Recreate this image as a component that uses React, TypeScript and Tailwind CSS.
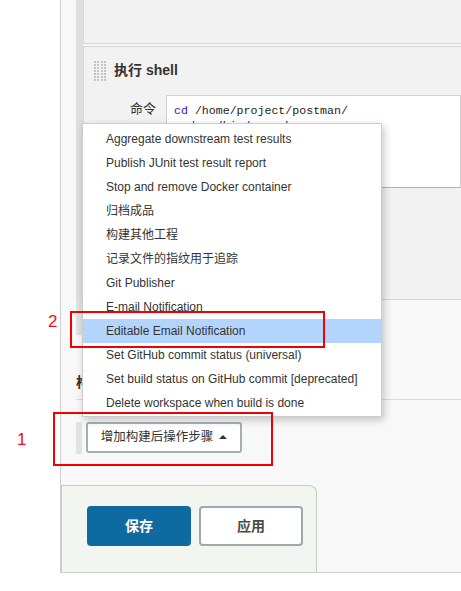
import React from "react";

const items = [
  "Aggregate downstream test results",
  "Publish JUnit test result report",
  "Stop and remove Docker container",
  "归档成品",
  "构建其他工程",
  "记录文件的指纹用于追踪",
  "Git Publisher",
  "E-mail Notification",
  "Editable Email Notification",
  "Set GitHub commit status (universal)",
  "Set build status on GitHub commit [deprecated]",
  "Delete workspace when build is done",
];

const sans = "font-['Liberation_Sans','Noto_Sans_CJK_SC',sans-serif]";

function DragHandle() {
  return (
    <div className="grid grid-cols-4 gap-[1px] w-[12px]">
      {Array.from({ length: 28 }).map((_, i) => (
        <div key={i} className="h-[2px] w-[2px] bg-[#c4c4c4]" />
      ))}
    </div>
  );
}

export default function App() {
  return (
    <div className={`relative h-[591px] w-[461px] overflow-hidden bg-white ${sans}`}>
      <div className="ml-[60px] flex h-[573px] flex-col border-b border-l border-[#cfcfcf] bg-[#f8f8f8]">
        {/* previous step */}
        <div className="flex h-[44px] pl-[15px]">
          <div className="w-[7px] bg-[#dedede]" />
          <div className="flex-1 border-b border-l border-[#d6d6d6] bg-[#f2f2f2]" />
        </div>
        <div className="flex h-[2px] pl-[15px]">
          <div className="w-[7px] bg-[#dedede]" />
        </div>
        {/* shell step */}
        <div className="flex h-[254px] pl-[15px]">
          <div className="w-[7px] bg-[#dedede]" />
          <div className="flex-1 border-b border-l border-t border-[#d6d6d6] bg-[#f2f2f2]">
            <div className="flex items-center gap-[8px] pl-[10px] pt-[13px]">
              <DragHandle />
              <span className="text-[14px] font-bold text-[#333]">执行 shell</span>
            </div>
            <div className="mt-[14px] flex">
              <div className="w-[72px] pt-[4px] text-right text-[13px] text-[#333]">命令</div>
              <div className="ml-[10px] h-[93px] flex-1 border border-[#cfcfcf] border-b-[#a9b6c0] bg-white pl-[7px] pt-[7px] font-['Liberation_Mono',monospace] text-[11.6px] leading-[15px] text-[#222]">
                <div className="whitespace-nowrap">
                  <span className="text-[#3d10b0]">cd</span> /home/project/postman/
                </div>
                <div className="whitespace-nowrap">
                  <span className="text-[#3d10b0]">node</span> ./bin/run.sh
                </div>
              </div>
            </div>
          </div>
        </div>
        {/* post-build */}
        <div className="flex h-[35px] pl-[15px]">
          <div className="w-[6px] bg-[#e2e2e2]" />
        </div>
        <div className="ml-[15px] mt-[37px] border-b border-[#dcdcdc] pb-[6px] text-[14px] font-bold text-[#333]">
          构建后操作
        </div>
        <div className="mt-[22px] flex pl-[15px]">
          <div className="h-[32px] w-[6px] bg-[#e2e2e2]" />
          <button className="ml-[4px] flex h-[31px] w-[156px] items-center justify-center gap-[6px] rounded-[3px] border-2 border-[#a3aeb5] bg-white text-[12.5px] text-[#333]">
            增加构建后操作步骤
            <span className="mb-[2px] h-0 w-0 border-x-[4px] border-b-[4px] border-x-transparent border-b-[#333]" />
          </button>
        </div>
        <div className="flex-1" />
        <div className="ml-[0px] flex h-[87px] w-[256px] gap-[8px] rounded-tr-[8px] border-r border-t border-l border-[#bcd0c3] bg-[#f3f6f0] pl-[25px] pt-[20px]">
          <button className="h-[40px] w-[104px] rounded-[4px] bg-[#0e6aa0] text-[14px] font-bold text-white">
            保存
          </button>
          <button className="h-[40px] w-[104px] rounded-[4px] border-2 border-[#9da8af] bg-white text-[14px] font-bold text-[#4a4a4a]">
            应用
          </button>
        </div>
      </div>

      {/* dropdown menu */}
      <div className="absolute left-[82px] top-[123px] w-[300px] border border-[#cccccc] bg-white pb-[1px] pt-[3px] shadow-[2px_3px_8px_rgba(0,0,0,0.22)]">
        {items.map((t, i) => (
          <div
            key={t}
            className={`flex h-[24px] items-center whitespace-nowrap pl-[23px] text-[12px] text-[#333] ${
              i === 8 ? "bg-[#b3d4fd]" : ""
            }`}
          >
            {t}
          </div>
        ))}
      </div>

      {/* annotations */}
      <div className="absolute left-[70px] top-[311px] h-[37px] w-[255px] border-2 border-[#f00000]" />
      <div className="absolute left-[48px] top-[309px] text-[17px] text-[#ee1111]">2</div>
      <div className="absolute left-[53px] top-[412px] h-[54px] w-[220px] border-2 border-[#f00000]" />
      <div className="absolute left-[17px] top-[427px] text-[17px] text-[#ee1111]">1</div>
    </div>
  );
}
